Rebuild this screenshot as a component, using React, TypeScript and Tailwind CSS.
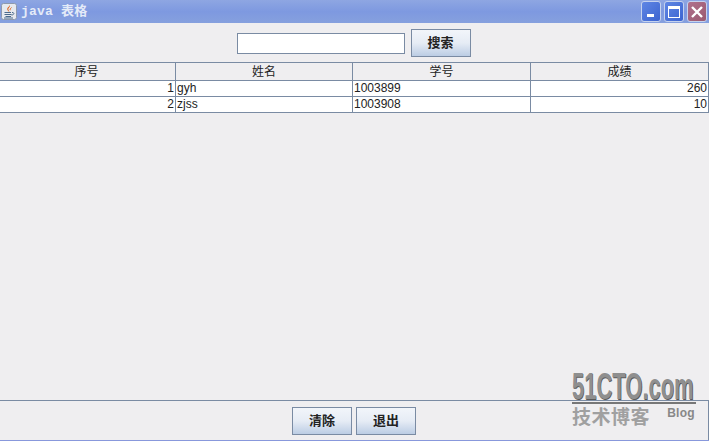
import React from 'react';

const cjk = '"Liberation Sans", "Noto Sans CJK SC", sans-serif';

const rows = [
  { no: '1', name: 'gyh', id: '1003899', score: '260' },
  { no: '2', name: 'zjss', id: '1003908', score: '10' },
];

function JavaIcon() {
  return (
    <svg width="16" height="17" viewBox="0 0 16 17" className="shrink-0">
      <rect x="0.5" y="0.5" width="15" height="16" rx="2" fill="#e6e9ee" stroke="#8d99ad" />
      <path d="M8.5 2 C10 4 6.5 5 7.5 7 C8 8 8.5 8.5 8.5 9 C7 8 5.5 6.5 6.5 5 C7 4 8.5 3.5 8.5 2 Z" fill="#e0641c" />
      <path d="M10.5 4.5 C9.5 5.5 8.8 6 9.3 7.2" stroke="#e0641c" fill="none" />
      <path d="M3.5 9.5 H10 M3.5 11.5 H10.5 M4.5 13.5 H10 M3 15 H12" stroke="#4a6a8c" />
      <path d="M11 9.5 C13.5 9 13.5 12 10.5 12" stroke="#4a6a8c" fill="none" />
    </svg>
  );
}

function WinButton({ bg, children }: { bg: string; children: React.ReactNode }) {
  return (
    <div className={`w-[20px] h-[21px] rounded-[3px] border border-[#c5d2ee] flex items-center justify-center ${bg}`}>
      <svg width="16" height="16" viewBox="0 0 16 16">{children}</svg>
    </div>
  );
}

function SwingButton({ label }: { label: string }) {
  return (
    <button className="w-[60px] h-[28px] border border-[#7a8ba3] bg-gradient-to-b from-[#f2f5fa] via-[#e6ecf5] to-[#bccde4] text-[13px] font-bold text-[#222]">
      {label}
    </button>
  );
}

export default function App() {
  return (
    <div
      className="relative w-[709px] h-[441px] overflow-hidden bg-[#efeef0] flex flex-col text-[12px] text-[#222]"
      style={{ fontFamily: cjk }}
    >
      {/* title bar */}
      <div className="h-[23px] shrink-0 flex items-center pl-[1px] pr-[2px] bg-gradient-to-b from-[#8ea6e2] via-[#7e99e0] to-[#86a0de]">
        <JavaIcon />
        <span
          className="ml-[4px] text-[13px] font-bold text-[#e4ebf8] tracking-[0.2px]"
          style={{ fontFamily: '"Liberation Mono", "Noto Sans CJK SC", monospace' }}
        >
          java 表格
        </span>
        <div className="ml-auto flex gap-[3px]">
          <WinButton bg="bg-gradient-to-br from-[#5f86e4] to-[#3d64d0]">
            <rect x="4" y="10" width="7" height="3" fill="#fff" />
          </WinButton>
          <WinButton bg="bg-gradient-to-br from-[#5f86e4] to-[#3d64d0]">
            <rect x="2.5" y="2.5" width="11" height="11" fill="none" stroke="#fff" />
            <rect x="2" y="2" width="12" height="3" fill="#fff" />
          </WinButton>
          <WinButton bg="bg-gradient-to-br from-[#b0708c] to-[#9a5a70]">
            <path d="M3 3 L13 13 M13 3 L3 13" stroke="#fff" strokeWidth="2.4" />
          </WinButton>
        </div>
      </div>

      {/* search row */}
      <div className="h-[39px] shrink-0 flex items-center justify-center gap-[6px] pr-[2px] pt-[1px]">
        <input className="w-[168px] h-[21px] bg-white border border-[#7a8ba3] outline-none" />
        <SwingButton label="搜索" />
      </div>

      {/* table */}
      <div className="shrink-0 w-[709px] border-t border-[#7a8ba3]">
        <div className="grid grid-cols-[176px_177px_178px_178px] h-[18px] border-b border-[#7a8ba3]">
          {['序号', '姓名', '学号', '成绩'].map((h, i) => (
            <div key={h} className={`text-center leading-[18px] border-r border-[#7a8ba3] ${i === 0 ? 'pr-[2px]' : ''}`}>
              {h}
            </div>
          ))}
        </div>
        {rows.map((r) => (
          <div key={r.no} className="grid grid-cols-[176px_177px_178px_178px] h-[16px] bg-white border-b border-[#7a8ba3] leading-[15px]">
            <div className="text-right pr-[1px] border-r border-[#7a8ba3]">{r.no}</div>
            <div className="pl-[1px] border-r border-[#7a8ba3]">{r.name}</div>
            <div className="pl-[1px] border-r border-[#7a8ba3]">{r.id}</div>
            <div className="text-right pr-[1px] border-r border-[#7a8ba3]">{r.score}</div>
          </div>
        ))}
      </div>

      <div className="flex-1" />

      {/* bottom buttons */}
      <div className="h-[40px] shrink-0 w-[709px] flex items-start justify-center gap-[4px] border-t border-r border-[#7a8ba3] pt-[6px]">
        <SwingButton label="清除" />
        <SwingButton label="退出" />
      </div>
      <div className="h-[1px] shrink-0 bg-[#8898dc]" />

      {/* 51CTO watermark */}
      <div className="absolute left-[572px] top-[373px] w-[124px] text-[#8f8f8f]">
        <div
          className="text-[36px] leading-[28px] font-bold origin-left scale-x-[0.61] whitespace-nowrap w-[124px]"
          style={{ textShadow: '1px 1px 0 #5a5a5a' }}
        >
          51CTO.com
        </div>
        <div className="h-[2px] bg-[#777] mt-[1px]" />
        <div className="flex items-start justify-between mt-[2px]">
          <span className="text-[19px] leading-[24px] font-bold text-[#a0a0a0] tracking-[0.5px]">技术博客</span>
          <span className="text-[12px] leading-[14px] font-bold text-[#888] tracking-[0.3px] pr-[1px]">Blog</span>
        </div>
      </div>
    </div>
  );
}
